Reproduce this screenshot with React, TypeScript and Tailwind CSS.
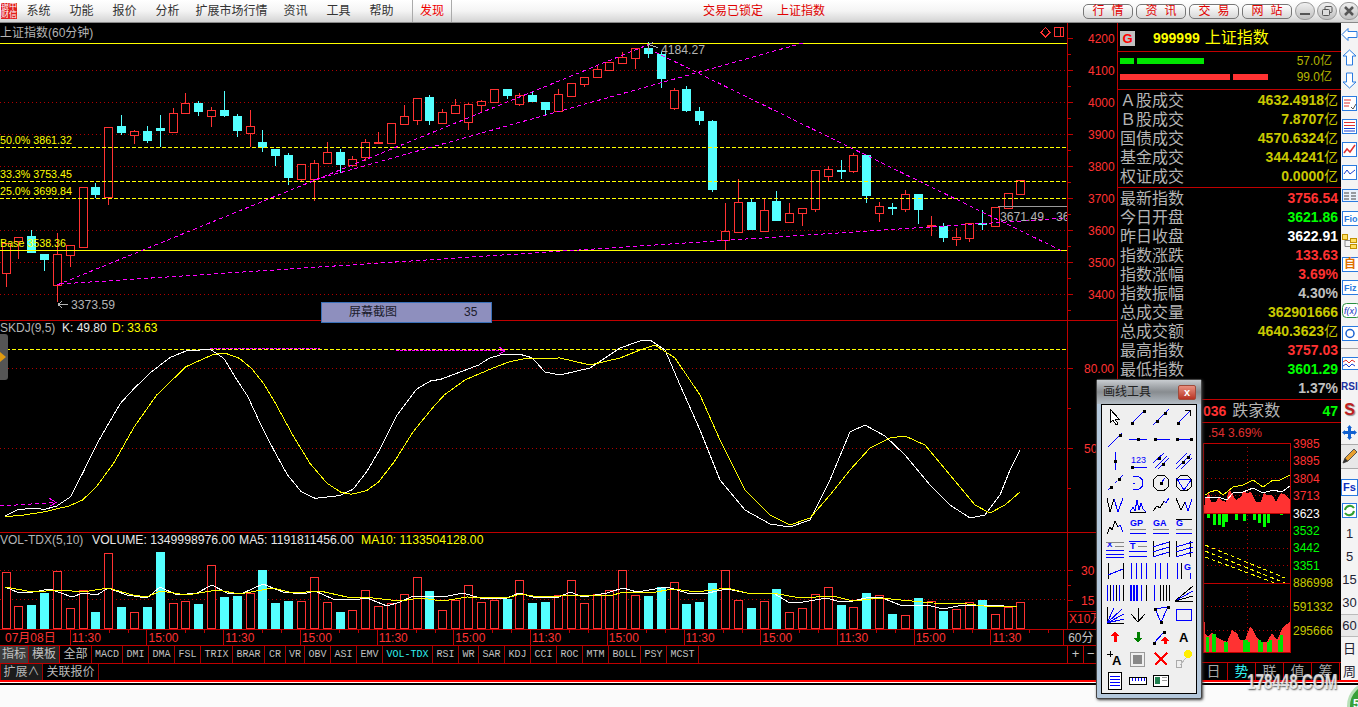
import React from 'react';

const RED = '#ff3232';
const CY = '#54ffff';
const GRID = '#b00000';
const DK = '#c00000';
const YEL = '#ffff00';
const MAG = '#ff00ff';

type Cn = [string, number, number, number, number];
const candles: Cn[] = [
  ['r',243,273,243,287],['r',237,241,237,259],['c',236,253,230,253],['c',254,260,254,271],['r',254,285,233,302],
  ['r',245,255,245,267],['r',187,247,187,247],['c',187,195,183,198],['r',127,197,127,205],['c',126,133,115,135],
  ['r',131,135,130,144],['c',131,141,126,143],['c',128,131,115,147],['r',113,132,108,132],['r',103,113,93,113],
  ['c',103,112,101,116],['r',110,116,107,127],['c',110,116,91,117],['c',116,131,114,137],['r',126,133,110,147],
  ['c',142,148,130,152],['c',149,156,149,166],['c',155,178,153,185],['r',164,179,164,182],['r',163,179,160,201],
  ['r',152,163,142,164],['c',152,165,149,173],['r',159,165,156,167],['r',142,157,139,161],['r',142,143,132,143],
  ['r',123,143,123,143],['r',116,124,105,125],['r',98,120,98,125],['c',97,121,95,125],['r',112,123,109,123],
  ['r',105,113,99,113],['r',104,122,103,130],['r',101,105,100,113],['r',89,102,89,102],['c',89,96,89,99],
  ['r',95,104,93,106],['c',95,102,91,102],['c',102,110,102,115],['r',94,111,89,111],['r',83,96,83,96],
  ['r',77,84,77,87],['r',69,77,66,77],['r',62,70,62,70],['r',57,63,52,64],['r',48,58,48,69],
  ['c',48,54,42,58],['c',54,79,52,88],['r',90,108,88,110],['c',89,111,86,112],['c',111,121,107,125],
  ['c',121,190,120,192],['r',231,240,203,250],['r',202,232,179,232],['c',202,230,199,230],['r',210,231,199,231],
  ['c',201,221,191,221],['r',213,222,203,222],['r',208,213,208,226],['r',170,209,170,212],['r',169,176,166,182],
  ['c',170,171,160,179],['r',155,171,153,173],['c',155,196,155,203],['r',206,213,202,222],['c',207,208,203,215],
  ['r',194,209,190,212],['c',194,210,194,224],['r',225,226,216,236],['c',226,238,223,242],['r',237,239,228,246],
  ['r',223,238,223,242],['c',223,225,210,230],['r',207,226,207,226],['r',193,208,193,208],['r',180,194,180,194],
];
const vols = [572,606,605,593,571,608,590,612,553,607,612,607,552,603,601,604,565,597,596,593,570,603,601,601,577,602,612,610,590,606,603,594,577,591,610,600,585,602,600,599,580,603,602,595,580,603,594,590,570,595,596,587,582,604,602,583,570,600,608,601,589,612,608,594,587,605,607,593,595,614,615,598,601,611,609,602,600,614,607,602];
const cx = (i: number) => Math.round(5.5 + 12.848 * i);

const toPts = (a: number[][]) => a.map((p) => p.join(',')).join(' ');
const kz = (a: number[][]) => a.map(([x, y]) => [+(x / 2.904).toFixed(1), +(320 + y / 3).toFixed(1)]);

const kWhite = [...kz([[15,588],[50,570],[90,565],[130,568],[165,558],[205,530],[240,460],[280,375],[310,320],[350,250],[390,205],[440,155],[495,112],[540,93],[610,88],[650,115],[685,175],[720,230],[760,320],[800,400],[835,465],[875,515],[915,535],[985,527],[1025,508],[1065,455],[1105,385],[1150,290],[1210,207],[1250,183],[1280,178],[1390,135],[1420,115],[1460,103],[1510,103],[1545,113]]),
  [545,372],[560,375],[590,368],[620,348],[640,341],[650,340],[665,350],[680,385],[700,430],[720,480],[745,510],[770,524],[790,527],[810,520],[830,480],[850,432],[865,425],[885,436],[905,455],[930,485],[950,505],[970,518],[985,515],[1000,495],[1010,470],[1020,450]];
const kYel = [...kz([[15,590],[70,585],[130,575],[200,558],[240,540],[280,500],[330,430],[390,320],[455,225],[540,140],[620,103],[655,100],[695,115],[730,145],[765,190],[800,250],[850,345],[900,430],[950,490],[990,517],[1020,523],[1065,512],[1100,485],[1145,425],[1200,335],[1255,265],[1290,225],[1350,180],[1430,145],[1480,125],[1530,115]]),
  [560,358],[590,365],[620,358],[640,350],[655,345],[675,358],[700,395],[720,440],[745,490],[770,515],[790,525],[810,518],[830,495],[850,470],[870,448],[890,438],[905,436],[925,445],[950,475],[975,505],[990,513],[1005,505],[1020,492]];

const ma5 = [[5,587],[17,592],[33,592],[50,589],[72,597],[83,593],[97,595],[108,588],[127,595],[147,598],[160,587],[177,595],[197,593],[212,585],[227,593],[243,593],[263,584],[283,592],[303,594],[315,591],[333,599],[353,600],[367,598],[387,606],[400,602],[413,596],[433,596],[443,597],[463,593],[480,598],[507,598],[519,593],[533,597],[557,598],[570,592],[583,597],[607,593],[623,588],[637,592],[667,587],[687,593],[703,594],[727,589],[747,593],[760,593],[773,593],[790,603],[803,602],[827,598],[840,602],[853,601],[870,597],[880,597],[900,605],[927,605],[943,609],[963,605],[990,605],[1017,607]];
const ma10 = [[5,587],[33,592],[60,590],[83,592],[108,588],[133,595],[147,597],[160,591],[187,595],[217,590],[240,594],[273,588],[293,593],[320,591],[347,597],[373,598],[400,601],[420,598],[443,601],[467,597],[507,598],[520,594],[540,597],[580,595],[610,596],[623,592],[650,593],[673,589],[697,592],[727,588],[747,593],[773,593],[800,598],[833,596],[853,601],[880,598],[933,603],[967,604],[993,607],[1017,606]];

function T({ x, y, s = 11, c = '#b4b4b4', w, a, children }: { x: number; y: number; s?: number; c?: string; w?: number; a?: 'start' | 'end' | 'middle'; children: React.ReactNode }) {
  return <text x={x} y={y} fontSize={s} fill={c} fontWeight={w} textAnchor={a}>{children}</text>;
}

function Dotted({ y, w = 1067 }: { y: number; w?: number }) {
  return <line x1={0} x2={w} y1={y + 0.5} y2={y + 0.5} stroke={GRID} strokeDasharray="1 3" />;
}
function YDash({ y }: { y: number }) {
  return <line x1={0} x2={1067} y1={y + 0.5} y2={y + 0.5} stroke={YEL} strokeDasharray="4 2" />;
}

function PriceChart() {
  return (
    <svg width={1067} height={297} viewBox="0 23 1067 297" shapeRendering="crispEdges" className="block shrink-0">
      <T x={0} y={37} s={12}>上证指数(60分钟)</T>
      {[70, 102, 134, 166, 230, 262, 294].map((y) => <Dotted key={y} y={y} />)}
      {candles.map(([k, bt, bb, wt, wb], i) => {
        const x = cx(i);
        const col = k === 'r' ? RED : CY;
        return (
          <g key={i}>
            {wt < bt && <line x1={x + 0.5} x2={x + 0.5} y1={wt} y2={bt} stroke={col} />}
            {wb > bb && <line x1={x + 0.5} x2={x + 0.5} y1={bb} y2={wb} stroke={col} />}
            {k === 'r'
              ? <rect x={x - 3.5} y={bt + 0.5} width={8} height={Math.max(bb - bt, 1)} fill="#000" stroke={col} />
              : <rect x={x - 4} y={bt} width={9} height={Math.max(bb - bt, 2)} fill={col} />}
          </g>
        );
      })}
      <line x1={0} x2={1067} y1={43.5} y2={43.5} stroke={YEL} />
      <line x1={0} x2={1067} y1={250.5} y2={250.5} stroke={YEL} />
      <YDash y={147} /><YDash y={181} /><YDash y={198} />
      <g stroke={MAG} strokeDasharray="4 3" fill="none">
        <line x1={57} y1={285} x2={650} y2={44} />
        <line x1={314} y1={180} x2={803} y2={43} />
        <line x1={60} y1={284} x2={1067} y2={218} />
        <line x1={655} y1={52} x2={1062} y2={251} />
      </g>
      <line x1={998} x2={1067} y1={206.5} y2={206.5} stroke="#9a9a9a" />
      <T x={0} y={144} c={YEL} s={10.7}>50.0% 3861.32</T>
      <T x={0} y={178} c={YEL} s={10.7}>33.3% 3753.45</T>
      <T x={0} y={195} c={YEL} s={10.7}>25.0% 3699.84</T>
      <T x={0} y={247} c={YEL} s={10.7}>Base 3538.36</T>
      <g stroke="#b4b4b4" fill="none">
        <path d="M68 304.5H58M58 304.5l4 -3M58 304.5l4 3" />
        <path d="M658 47.5L648 44.5M648 44.5v6M648 44.5l5 -2" />
      </g>
      <T x={71} y={309} s={12.2}>3373.59</T>
      <T x={661} y={54} s={12.2}>4184.27</T>
      <T x={1000} y={221} s={12.2}>3671.49</T>
      <T x={1056} y={221} s={12.2}>36</T>
      <path d="M1045.5 27.5L1050 32.5L1045.5 37L1041 32.5Z" fill="none" stroke={RED} />
      <rect x={1054.5} y={27.5} width={9} height={9} fill="none" stroke={RED} />
      <line x1={1060.5} x2={1060.5} y1={27} y2={37} stroke={RED} />
    </svg>
  );
}

function KdjChart() {
  return (
    <svg width={1067} height={211} viewBox="0 321 1067 211" shapeRendering="crispEdges" className="block shrink-0">
      <T x={0} y={332} s={12}>SKDJ(9,5)</T>
      <T x={62} y={332} s={12} c="#e8e8e8">K: 49.80</T>
      <T x={112} y={332} s={12} c={YEL}>D: 33.63</T>
      <Dotted y={368} /><Dotted y={448} />
      <line x1={0} x2={1067} y1={349.5} y2={349.5} stroke={YEL} strokeDasharray="4 2" />
      <polyline points={toPts(kWhite)} fill="none" stroke="#fff" />
      <polyline points={toPts(kYel)} fill="none" stroke={YEL} />
      <g stroke={MAG} fill="none">
        <path d="M0 506L55 502.5" strokeDasharray="4 3" />
        <path d="M49 498L56 502.5L50 506" />
        <path d="M210 348H320" strokeDasharray="3 1" />
        <path d="M396 350.5H505" strokeDasharray="3 1" />
        <path d="M499 347L505 351L499 354" />
      </g>
    </svg>
  );
}

function VolChart() {
  return (
    <svg width={1067} height={96} viewBox="0 533 1067 96" shapeRendering="crispEdges" className="block shrink-0">
      <T x={0} y={544} s={12}>VOL-TDX(5,10)</T>
      <T x={92} y={544} s={12.2} c="#e8e8e8">VOLUME: 1349998976.00</T>
      <T x={239} y={544} s={12.2} c="#e8e8e8">MA5: 1191811456.00</T>
      <T x={361} y={544} s={12.2} c={YEL}>MA10: 1133504128.00</T>
      <Dotted y={570} /><Dotted y={599} />
      {vols.map((top, i) => {
        const x = cx(i);
        return candles[i][0] === 'r'
          ? <rect key={i} x={x - 3.5} y={top + 0.5} width={8} height={628 - top} fill="#000" stroke={RED} />
          : <rect key={i} x={x - 4} y={top} width={9} height={629 - top} fill={CY} />;
      })}
      <polyline points={toPts(ma5)} fill="none" stroke="#fff" />
      <polyline points={toPts(ma10)} fill="none" stroke={YEL} />
    </svg>
  );
}

function Axis({ top, h, majors, minors, labels }: { top: number; h: number; majors: number[]; minors: number[]; labels: [string, number, number][] }) {
  return (
    <div className="w-[49px] border-l border-[#c00000] box-content">
      <svg width={49} height={h} viewBox={`0 ${top} 49 ${h}`} shapeRendering="crispEdges" className="block">
        {majors.map((y) => <line key={y} x1={0} x2={5} y1={y + 0.5} y2={y + 0.5} stroke={DK} />)}
        {minors.map((y) => <line key={y} x1={0} x2={3} y1={y + 0.5} y2={y + 0.5} stroke={DK} />)}
        {labels.map(([t, x, y]) => <T key={t} x={x} y={y + 5} s={12} c={RED}>{t}</T>)}
      </svg>
    </div>
  );
}

const timeLabels = ['11:30','15:00','11:30','15:00','11:30','15:00','11:30','15:00','11:30','15:00','11:30','15:00','11:30'];
const tabs: [string, string][] = [['MACD','w-[31px]'],['DMI','w-[26px]'],['DMA','w-[26px]'],['FSL','w-[26px]'],['TRIX','w-[32px]'],['BRAR','w-[32px]'],['CR','w-[21px]'],['VR','w-[19px]'],['OBV','w-[26px]'],['ASI','w-[26px]'],['EMV','w-[26px]'],['VOL-TDX','w-[50px]'],['RSI','w-[26px]'],['WR','w-[20px]'],['SAR','w-[26px]'],['KDJ','w-[26px]'],['CCI','w-[26px]'],['ROC','w-[26px]'],['MTM','w-[26px]'],['BOLL','w-[32px]'],['PSY','w-[26px]'],['MCST','w-[32px]']];

function LeftColumn() {
  return (
    <div className="w-[1117px] shrink-0 flex flex-col bg-black">
      <div className="flex h-[298px] border-b border-[#c00000]">
        <PriceChart />
        <Axis top={23} h={297}
          majors={[38, 70, 102, 134, 166, 198, 230, 262, 294]}
          minors={[54, 86, 118, 150, 182, 214, 246, 278, 310]}
          labels={[['4200',20,38],['4100',20,70],['4000',20,102],['3900',20,134],['3800',20,166],['3700',20,198],['3600',20,230],['3500',20,262],['3400',20,294]]} />
      </div>
      <div className="flex h-[212px] border-b border-[#c00000]">
        <KdjChart />
        <Axis top={321} h={211} majors={[368, 448]} minors={[408, 488]} labels={[['80.00',16,368],['50.00',16,448]]} />
      </div>
      <div className="flex h-[97px] border-b border-[#c00000]">
        <VolChart />
        <div className="w-[49px] border-l border-[#c00000] box-content flex flex-col">
          <svg width={49} height={78} viewBox="0 533 49 78" shapeRendering="crispEdges" className="block">
            {[570, 600].map((y) => <line key={y} x1={0} x2={5} y1={y + 0.5} y2={y + 0.5} stroke={DK} />)}
            <line x1={0} x2={3} y1={585.5} y2={585.5} stroke={DK} />
            <T x={13} y={575} s={12} c={RED}>30</T>
            <T x={13} y={605} s={12} c={RED}>15</T>
          </svg>
          <div className="border-t border-[#c00000] h-[18px] pl-[1px] text-[12px] leading-[15px] text-[#ff3232] whitespace-nowrap">X10万</div>
        </div>
      </div>
      <div className="flex h-[16px] border-b border-[#c00000]">
        <div className="w-[70px] pl-[5px] text-[12px] leading-[17px] text-[#ff3232] whitespace-nowrap">07月08日</div>
        {timeLabels.map((t, i) => (
          <div key={i} className={`relative border-l border-[#c00000] pl-[1px] text-[12px] leading-[17px] text-[#ff3232] ${i === 12 ? 'w-[73px]' : 'w-[77px]'}`}>
            {t}
            <span className="absolute left-[38px] top-0 w-px h-[3px] bg-[#c00000]" />
            <span className="absolute left-[57px] top-0 w-px h-[3px] bg-[#c00000]" />
          </div>
        ))}
        <div className="w-[49px] border-l border-[#c00000] box-content pl-[4px] text-[12px] leading-[17px] text-[#c4c4c4] whitespace-nowrap">60分</div>
      </div>
      <div className="flex h-[18px] border-b border-[#c00000] text-[#c0c0c0]">
        <div className="w-[29px] text-center text-[12px] leading-[17px] bg-[#3c3c3c] border-r border-[#a00000]">指标</div>
        <div className="w-[31px] text-center text-[12px] leading-[17px] bg-[#262626] border-r border-[#d00000]">模板</div>
        <div className="w-[32px] text-center text-[12px] leading-[17px] border-r border-[#a00000]">全部</div>
        {tabs.map(([t, w]) => (
          <div key={t} className={`${w} text-center font-['Liberation_Mono',monospace] text-[10px] leading-[17px] border-r border-[#a00000] ${t === 'VOL-TDX' ? 'text-[#30f0f0]' : ''}`}>{t}</div>
        ))}
        <div className="flex-1" />
        <div className="w-[50px] border-l border-[#c00000] flex text-[13px] leading-[16px] text-[#c4c4c4]">
          <div className="w-[16px] text-center border-r border-[#c00000]">+</div>
          <div className="flex-1 pl-[3px]">−</div>
        </div>
      </div>
      <div className="flex h-[16px] text-[#b8b8b8] text-[12px] leading-[17px]">
        <div className="w-[43px] text-center bg-[#1c1c1c] border-r border-l border-[#a00000]">扩展∧</div>
        <div className="w-[56px] text-center border-r border-[#a00000]">关联报价</div>
      </div>
    </div>
  );
}

const VAL_Y = 'text-[#c8c800]';
function Row({ label, value, unit, color }: { label: string; value: string; unit?: boolean; color: string }) {
  return (
    <div className="flex justify-between items-center h-[19px] pl-[2px] pr-[3px] whitespace-nowrap">
      <span className="text-[16px] leading-[19px] text-[#b4b4b4]">{label}</span>
      <span className={`${color} text-[14px] leading-[19px] font-bold`}>
        {value}{unit && <span className="font-normal text-[14px]">亿</span>}
      </span>
    </div>
  );
}

function MiniChart() {
  const redTop = [[1205,498],[1207,498],[1209,492],[1211,502],[1216,502],[1219,496],[1221,500],[1226,502],[1229,490],[1231,492],[1236,500],[1241,497],[1244,490],[1246,493],[1251,492],[1254,498],[1256,502],[1261,502],[1264,493],[1266,495],[1271,495],[1274,498],[1276,502],[1281,493],[1286,495],[1290,500]];
  const green: [number, number][] = [[1207,518],[1213,525],[1218,525],[1222,527],[1225,522],[1235,520],[1243,521],[1253,520],[1258,523],[1263,527],[1267,523],[1280,515]];
  const vol = [[1205,633],[1208,637],[1212,632],[1215,637],[1218,638],[1222,640],[1227,642],[1232,630],[1237,633],[1240,640],[1245,640],[1250,627],[1253,630],[1257,638],[1262,642],[1267,642],[1272,633],[1277,640],[1283,627],[1287,624],[1290,622]];
  return (
    <svg width={223} height={220} viewBox="1118 443 223 220" shapeRendering="crispEdges" className="block overflow-visible">
      {[460, 478, 495, 530, 548, 565, 606, 630].map((y) => <line key={y} x1={1203} x2={1291} y1={y + 0.5} y2={y + 0.5} stroke={GRID} strokeDasharray="1 3" />)}
      <line x1={1247.5} x2={1247.5} y1={443} y2={653} stroke={GRID} strokeDasharray="1 3" />
      <polygon points={`1204,513 ${toPts(redTop)} 1290,513`} fill={RED} />
      {green.map(([x, y]) => <rect key={x} x={x} y={514} width={3} height={y - 514} fill="#00ff00" />)}
      <polyline points="1205,495 1210,492 1217,490 1223,495 1233,487 1243,485 1253,480 1263,487 1273,480 1280,480 1290,475" fill="none" stroke={YEL} />
      <polyline points="1205,498 1212,497 1218,497 1227,500 1233,493 1243,492 1253,488 1263,493 1273,490 1282,492 1290,486" fill="none" stroke="#fff" />
      <g stroke={YEL} strokeDasharray="4 3">
        <line x1={1205} y1={545} x2={1285} y2={578} />
        <line x1={1205} y1={551} x2={1285} y2={583} />
        <line x1={1205} y1={557} x2={1275} y2={583} />
      </g>
      <polygon points={`1204,653 1204,610 ${toPts(vol)} 1291,653`} fill={RED} />
      {[[1206,637],[1212,634],[1213,634],[1224,642],[1225,642],[1243,640],[1245,640],[1247,642],[1258,640],[1260,642],[1267,642],[1269,640],[1278,640],[1280,635]].map(([x, y], i) => (
        <rect key={i} x={x} y={y} width={3} height={653 - y} fill="#00e000" />
      ))}
      <rect x={1203.5} y={443.5} width={87} height={209} fill="none" stroke={DK} />
      <line x1={1203} x2={1291} y1={513.5} y2={513.5} stroke={DK} />
      <line x1={1203} x2={1291} y1={583.5} y2={583.5} stroke={DK} />
      <line x1={1118} x2={1341} y1={662.5} y2={662.5} stroke={DK} />
      {[['3985',443,RED],['3895',460,RED],['3804',478,RED],['3713',495,RED],['3623',513,'#fff'],['3532',530,'#00ff00'],['3442',547,'#00ff00'],['3351',565,'#00ff00']].map(([t, y, c]) => (
        <T key={t as string} x={1293} y={(y as number) + 5} s={12} c={c as string}>{t}</T>
      ))}
      {[['886998',582],['591332',606],['295666',630]].map(([t, y]) => (
        <T key={t as string} x={1293} y={(y as number) + 5} s={12} c="#c8c800">{t}</T>
      ))}
    </svg>
  );
}

function RightPanel() {
  return (
    <div className="w-[224px] shrink-0 border-l border-[#c00000] bg-black flex flex-col">
      <div className="h-[29px] border-b border-[#c00000] flex items-center pl-[2px] pt-[2px]">
        <div className="w-[15px] h-[15px] bg-[#c0c0c0] text-[#ff0000] font-bold text-[13px] leading-[15px] text-center">G</div>
        <span className="ml-[18px] text-[#ffff00] font-bold text-[14px]">999999</span>
        <span className="ml-[5px] text-[#ffff00] text-[16px]">上证指数</span>
      </div>
      <div className="h-[38px] border-b border-[#c00000] pt-px pl-[2px] pr-[9px] text-[12px] text-[#b8b800]">
        <div className="flex items-center h-[16px]">
          <span className="w-[14px] h-[6px] bg-[#00e600]" />
          <span className="ml-[3px] w-[67px] h-[6px] bg-[#00e600]" />
          <span className="ml-auto">57.0亿</span>
        </div>
        <div className="flex items-center h-[16px]">
          <span className="w-[110px] h-[6px] bg-[#ff3232]" />
          <span className="ml-[3px] w-[35px] h-[6px] bg-[#ff3232]" />
          <span className="ml-auto">99.0亿</span>
        </div>
      </div>
      <div className="border-b border-[#c00000] h-[98px] pt-px">
        <Row label="Ａ股成交" value="4632.4918" unit color={VAL_Y} />
        <Row label="Ｂ股成交" value="7.8707" unit color={VAL_Y} />
        <Row label="国债成交" value="4570.6324" unit color={VAL_Y} />
        <Row label="基金成交" value="344.4241" unit color={VAL_Y} />
        <Row label="权证成交" value="0.0000" unit color={VAL_Y} />
      </div>
      <div className="border-b border-[#c00000] h-[212px] pt-px">
        <Row label="最新指数" value="3756.54" color="text-[#ff3232]" />
        <Row label="今日开盘" value="3621.86" color="text-[#00ff00]" />
        <Row label="昨日收盘" value="3622.91" color="text-white" />
        <Row label="指数涨跌" value="133.63" color="text-[#ff3232]" />
        <Row label="指数涨幅" value="3.69%" color="text-[#ff3232]" />
        <Row label="指数振幅" value="4.30%" color="text-[#c0c0c0]" />
        <Row label="总成交量" value="362901666" color={VAL_Y} />
        <Row label="总成交额" value="4640.3623" unit color={VAL_Y} />
        <Row label="最高指数" value="3757.03" color="text-[#ff3232]" />
        <Row label="最低指数" value="3601.29" color="text-[#00ff00]" />
        <Row label="" value="1.37%" color="text-[#c0c0c0]" />
      </div>
      <div className="h-[23px] border-b border-[#c00000] flex items-center pl-[85px] pr-[3px] whitespace-nowrap">
        <span className="text-[#ff3232] font-bold text-[14px]">036</span>
        <span className="ml-[6px] text-[16px] text-[#b4b4b4]">跌家数</span>
        <span className="ml-auto text-[#00ff00] font-bold text-[14px]">47</span>
      </div>
      <div className="h-[20px] pl-[90px] text-[12px] leading-[20px] text-[#e03030]">.54 3.69%</div>
      <MiniChart />
      <div className="flex pl-[82px] h-[17px] text-[14px] leading-[17px] text-[#a8a8a8]">
        {['日', '势', '联', '值', '筹'].map((t, i) => (
          <div key={t} className={`w-[28px] text-center border-r border-[#c00000] ${i === 1 ? 'text-[#30f0f0]' : ''}`}>{t}</div>
        ))}
      </div>
    </div>
  );
}

const TI = ({ children }: { children: React.ReactNode }) => (
  <div className="h-[23px] flex items-center justify-center shrink-0">
    <svg width={17} height={17} viewBox="0 0 17 17">{children}</svg>
  </div>
);
const BLU = '#2a7be0';
const TxtI = ({ t, c = BLU, box = true, size = 9 }: { t: string; c?: string; box?: boolean; size?: number }) => (
  <TI>
    {box && <rect x={1.5} y={1.5} width={18} height={14} fill="#fff" stroke={BLU} />}
    <text x={3} y={12} fontSize={size} fill={c} fontWeight={700}>{t}</text>
  </TI>
);

function Toolbar() {
  const num = 'h-[23px] flex items-center justify-center text-[13px] text-[#223] shrink-0';
  return (
    <div className="w-[17px] shrink-0 bg-[#f4f4f4] flex flex-col overflow-hidden">
      <TI><path d="M1 8.5L7 2.5V5.5H16V11.5H7V14.5Z" fill="#fff" stroke={BLU} /></TI>
      <TI><path d="M8.5 1L15 7H11.5V16H5.5V7H2Z" fill="#fff" stroke={BLU} /></TI>
      <TI><path d="M8.5 16L15 10H11.5V1H5.5V10H2Z" fill="#fff" stroke={BLU} /></TI>
      <TI><rect x={1.5} y={1.5} width={14} height={14} fill="#fff" stroke={BLU} /><path d="M3 5H10M3 8H9M3 11H8" stroke="#e03030" /><path d="M10 12l2 2l3 -5" stroke="#555" fill="none" /></TI>
      <TI><rect x={1.5} y={1.5} width={14} height={14} fill="#fff" stroke={BLU} /><path d="M3 4.5H14M3 7.5H14" stroke="#e03030" /><path d="M3 10.5H14M3 13H14" stroke="#1a40d0" /></TI>
      <TI><rect x={1.5} y={1.5} width={14} height={14} fill="#fff" stroke={BLU} /><path d="M3 12L6 8L9 11L14 4" stroke="#e03030" fill="none" strokeWidth={1.5} /></TI>
      <TI><rect x={1.5} y={1.5} width={14} height={14} fill="#fff" stroke={BLU} /><path d="M3 10L6 6L9 10L14 6" stroke="#1a40d0" fill="none" /></TI>
      <TI><rect x={1.5} y={2.5} width={16} height={12} fill="#eaf2fb" stroke={BLU} /><path d="M3 6H8M10 6H15M3 9H8M10 9H15M3 12H8M10 12H15" stroke="#444" /></TI>
      <TxtI t="Fio" />
      <TI><rect x={1.5} y={1.5} width={5} height={5} fill="#ffe060" stroke="#c09000" /><rect x={9.5} y={5.5} width={6} height={4} fill="#ffe060" stroke="#c09000" /><rect x={9.5} y={11.5} width={6} height={4} fill="#ffe060" stroke="#c09000" /><path d="M4 7V13.5H9M4 7.5H9" stroke="#888" fill="none" /></TI>
      <TxtI t="自" c="#e07000" size={12} />
      <TxtI t="Fiz" />
      <TI><rect x={1.5} y={1.5} width={18} height={14} rx={4} fill="#fff" stroke="#2a9040" /><text x={3} y={12} fontSize={9} fontStyle="italic" fill="#1030c0">f(x)</text></TI>
      <TI><rect x={1.5} y={1.5} width={18} height={14} fill="#fff" stroke={BLU} /><circle cx={9} cy={8.5} r={4} fill="none" stroke="#1a60d0" strokeWidth={1.5} /></TI>
      <div className="h-[7px] shrink-0 flex items-start pt-[3px]"><div className="w-full h-px bg-[#aaa]" /></div>
      <TI><rect x={1.5} y={2.5} width={18} height={12} fill="#fff" stroke={BLU} /><path d="M2 7L5 5L8 8L11 5L14 7" stroke="#e03030" fill="none" /><path d="M2 11L5 9L8 12L11 9L14 11" stroke="#1a40d0" fill="none" /></TI>
      <div className="h-[23px] flex items-center shrink-0 text-[#2030a0] font-bold text-[10px] whitespace-nowrap overflow-hidden">RSI</div>
      <div className="h-[23px] flex items-center justify-center shrink-0 text-[#c02020] font-bold text-[16px] [text-shadow:1px_1px_1px_#888]">S</div>
      <TI><path d="M8.5 1L11 4H10V7H13V6L16 8.5L13 11V10H10V13H11L8.5 16L6 13H7V10H4V11L1 8.5L4 6V7H7V4H6Z" fill="#1060d0" /></TI>
      <div className="h-[25px] shrink-0 border-y border-[#aaa] bg-[#e8e8e8] flex items-center justify-center">
        <svg width={17} height={17} viewBox="0 0 17 17"><path d="M2 15L4 10L13 1L16 4L7 13Z" fill="#e8a030" stroke="#555" /><path d="M2 15L4 10L7 13Z" fill="#333" /></svg>
      </div>
      <div className="h-[7px] shrink-0" />
      <div className="h-[23px] flex items-center justify-center shrink-0">
        <div className="w-[17px] h-[17px] border border-[#2a7be0] bg-white text-[11px] leading-[15px] text-[#1030c0] pl-px font-bold">Fs</div>
      </div>
      <TI><rect x={1.5} y={1.5} width={14} height={14} fill="#fff" stroke={BLU} /><path d="M4 8A5 5 0 0 1 13 6M13 9A5 5 0 0 1 4 11" stroke="#30a030" strokeWidth={2} fill="none" /></TI>
      <div className={num}>1</div>
      <div className={num}>5</div>
      <div className={num}>15</div>
      <div className={num}>30</div>
      <div className={`${num} bg-[#e8e8e8] border-y border-[#bbb]`}>60</div>
      <div className={num}>日</div>
      <div className={num}>周</div>
    </div>
  );
}

const B = '#0000ff';
const L = (a: number, b: number, c: number, d: number, col = B, w = 1) => <line x1={a} y1={b} x2={c} y2={d} stroke={col} strokeWidth={w} />;
const D = (x: number, y: number) => <rect x={x - 1.5} y={y - 1.5} width={3} height={3} fill="#000" />;
const P = (pts: string, col = B) => <polyline points={pts} fill="none" stroke={col} />;
const TX = (t: string, x: number, y: number, s = 9, c = B, w = 700) => <text x={x} y={y} fontSize={s} fill={c} fontWeight={w}>{t}</text>;

const toolIcons: React.ReactNode[] = [
  <path d="M5 2V16L8 13L11 18L13 17L10 12H14Z" fill="#fff" stroke="#000" />,
  <>{L(4,16,16,4)}{D(4,16)}{D(16,4)}</>,
  <>{L(2,18,18,2)}{D(6,14)}{D(14,6)}</>,
  <>{L(4,16,17,3)}{D(4,16)}<path d="M17 3L11 4M17 3L16 9" stroke="#000" /></>,
  <>{L(3,18,17,4)}{D(15,6)}</>,
  <>{L(1,10,19,10)}{D(10,10)}</>,
  <>{L(4,10,19,10)}{D(4,10)}</>,
  <>{L(3,10,17,10)}{D(3,10)}{D(17,10)}</>,
  <>{L(10,1,10,19)}{D(10,10)}</>,
  <>{TX('123',3,12,9,B,400)}{L(4,16,19,16)}{D(4,16)}</>,
  <>{L(2,12,13,2)}{L(7,18,18,7)}{L(4,17,16,5)}{D(8,7)}{D(12,13)}</>,
  <>{L(2,13,13,2)}{L(7,18,18,7)}{L(2,18,17,3)}{D(9,11)}{D(14,6)}</>,
  <>{L(3,17,7,13)}{L(10,10,12,8)}{L(15,5,18,2)}{D(6,14)}{D(14,6)}</>,
  <path d="M5 3Q15 3 15 10T5 17M5 10h2" fill="none" stroke={B} />,
  <><circle cx={10} cy={10} r={8} fill="none" stroke="#000" />{L(10,10,14,5)}{D(10,10)}</>,
  <><circle cx={10} cy={10} r={8} fill="none" stroke="#000" /><path d="M3 6L17 7L10 17Z" fill="none" stroke={B} /></>,
  <>{P('2,3 5,17 9,4','#000')}{P('9,4 13,17 18,3')}</>,
  <>{P('2,17 5,12 7,16 9,5 11,15 13,8 15,14 18,17')}{L(2,17,18,17,'#000')}</>,
  <>{P('2,16 6,11 9,13 13,6','#000')}{P('13,6 15,8 18,3')}</>,
  <>{P('2,3 7,15 11,7','#000')}{P('11,7 14,16 18,4')}</>,
  <>{P('2,17 5,10 7,13 10,4 13,10','#000')}{P('13,10 15,8 18,15')}</>,
  <>{TX('GP',2,9)}{L(2,12,18,12,'#888')}{L(2,16,18,16)}</>,
  <>{TX('GA',2,9)}{L(2,12,18,12,'#888')}{L(2,16,18,16)}</>,
  <>{TX('G',2,9)}{L(2,2,18,2,'#000')}{L(2,12,18,12,'#888')}{L(2,16,18,16)}</>,
  <>{TX('X',2,8,8)}{L(1,3,19,3,'#888')}{L(10,7,19,7,'#888')}{L(1,11,19,11)}{L(1,15,19,15)}{L(1,18,19,18)}</>,
  <>{TX('T',2,10)}{L(1,2,19,2)}{L(10,7,19,7,'#888')}{L(1,12,19,12)}{L(1,17,19,17)}</>,
  <>{L(2,2,2,18,'#000')}{L(18,2,18,18,'#000')}{L(2,8,18,3)}{L(2,13,18,8)}{L(2,18,18,13)}</>,
  <>{L(2,2,2,18,'#000')}{L(16,2,16,18,'#000')}{L(2,8,19,3)}{L(2,13,19,8)}{L(2,18,19,13)}</>,
  <>{L(3,2,3,18,'#000')}{L(18,2,18,18,'#000')}{L(3,14,18,8)}</>,
  <>{L(3,2,3,18)}{L(8,2,8,18)}{L(13,2,13,18)}{L(18,2,18,18)}</>,
  <>{L(4,2,4,18)}{L(9,2,9,18)}{L(16,2,16,18)}</>,
  <>{L(3,2,3,18)}{L(7,2,7,18,'#000')}{TX('G',10,9)}{L(16,12,16,18)}</>,
  <>{L(2,2,2,18)}{L(5,2,5,18,'#000')}{L(8,2,8,18)}{L(11,2,11,18,'#000')}{L(14,2,14,18)}{L(18,2,18,18,'#000')}</>,
  <>{L(3,2,3,18,B,2)}{L(6,2,6,18,B,2)}{L(9,2,9,18,B,2)}{L(13,2,13,18)}{L(18,2,18,18,'#000')}</>,
  <>{L(3,2,3,18)}{L(9,2,9,18,'#000')}{L(12,2,12,18,'#000')}{L(15,2,15,18,'#000')}{L(18,2,18,18,'#000')}</>,
  <>{L(1,18,19,3,'#000')}{L(1,18,19,8)}{L(1,18,19,13,'#000')}{L(1,18,19,18,'#000')}</>,
  <>{L(2,2,2,18,'#000')}{L(2,18,19,18,'#000')}{L(2,18,17,4)}{L(2,18,19,9)}{L(2,18,19,14)}{L(2,18,9,3)}</>,
  <>{L(10,3,10,17,'#000')}{L(3,9,10,17,'#000')}{L(17,9,10,17,'#000')}</>,
  <><path d="M4 4L17 2L10 17Z" fill="none" stroke={B} />{D(4,4)}{D(17,2)}{D(10,17)}</>,
  <rect x={2.5} y={4.5} width={15} height={11} fill="none" stroke={B} />,
  <path d="M10 4L14 9H11.5V15H8.5V9H6Z" fill="#ff0000" />,
  <path d="M10 16L14 11H11.5V5H8.5V11H6Z" fill="#008000" />,
  <>{L(2,17,14,4)}{D(3,16)}{D(13,5)}<path d="M14 9L18 14H15.5V17H12.5V14H10Z" fill="#ff0000" /></>,
  <text x={5} y={15} fontSize={13} fontWeight={700} fill="#000">A</text>,
  <><text x={7} y={16} fontSize={13} fontWeight={700} fill="#000">A</text>{L(2,5,8,5,'#000')}{L(5,2,5,8,'#000')}</>,
  <><rect x={2.5} y={3.5} width={14} height={14} fill="none" stroke="#999" /><rect x={5} y={6} width={9} height={9} fill="#888" /></>,
  <>{L(4,4,16,16,'#ff0000',1.5)}{L(16,4,4,16,'#ff0000',1.5)}</>,
  <><rect x={2.5} y={11.5} width={5} height={7} fill="none" stroke="#aaa" />{L(6,16,16,4,'#bbb')}<circle cx={14} cy={5} r={4} fill="#ffee00" /></>,
  <><rect x={3.5} y={1.5} width={13} height={17} fill="#fff" stroke="#000" />{L(5,5,15,5)}{L(5,8,15,8)}{L(5,11,15,11)}{L(5,14,15,14)}</>,
  <><rect x={1.5} y={6.5} width={17} height={7} fill="#fff" stroke="#000" />{L(4,7,4,10)}{L(7,7,7,10)}{L(10,7,10,10)}{L(13,7,13,10)}{L(16,7,16,10)}</>,
  <><rect x={2.5} y={4.5} width={15} height={11} fill="#fff" stroke="#000" /><rect x={4} y={6} width={5} height={7} fill="#208050" /><rect x={11} y={6} width={5} height={1} fill="#999" /><rect x={11} y={9} width={5} height={1} fill="#999" /></>,
];

function ToolWindow() {
  return (
    <div className="absolute left-[1096px] top-[379px] w-[106px] h-[320px] border border-[#444] bg-[#b4c8dc] rounded-[2px] shadow-[1px_1px_3px_#333]">
      <div className="h-[24px] flex items-center justify-between pl-[6px] pr-[5px] bg-gradient-to-b from-[#c8ccd0] via-[#888c90] to-[#b4bcc4]">
        <span className="text-[12px] text-[#222]">画线工具</span>
        <div className="w-[18px] h-[15px] rounded-[2px] border border-[#a04a3a] bg-gradient-to-b from-[#e89080] to-[#b83020] text-white text-[11px] font-bold leading-[12px] text-center">x</div>
      </div>
      <div className="mx-[4px] h-[290px] border border-black bg-[#efefef] grid grid-cols-[repeat(4,23px)] auto-rows-[22px] px-[1px] pt-[1px]">
        {toolIcons.map((ic, i) => (
          <div key={i} className="flex items-center justify-center">
            <svg width={20} height={20} viewBox="0 0 20 20" shapeRendering="crispEdges">{ic}</svg>
          </div>
        ))}
      </div>
    </div>
  );
}

function Logo() {
  return (
    <div className="w-[16px] h-[16px] ml-[1px] bg-[#e02020] grid grid-cols-2 text-[8px] leading-[8px] text-white text-center overflow-hidden shrink-0">
      <span>银</span><span>中</span><span>财</span><span>信</span>
    </div>
  );
}

function Header() {
  const item = 'w-[43px] text-center shrink-0';
  const btn = 'w-[50px] h-[15px] rounded-[5px] border border-[#777] bg-gradient-to-b from-white to-[#d8d8d8] text-[#e00000] text-[12px] leading-[13px] flex justify-around px-[5px] shrink-0';
  const win = 'w-[20px] h-[18px] rounded-full border border-[#999] bg-gradient-to-b from-[#f0f0f0] to-[#c0c0c0] flex items-center justify-center shrink-0';
  return (
    <div className="h-[23px] flex items-center border-b border-[#888] bg-gradient-to-b from-white via-[#f4f4f4] to-[#d4d4d4] text-[12px] text-[#333] whitespace-nowrap overflow-hidden">
      <Logo />
      <div className={item}>系统</div>
      <div className={item}>功能</div>
      <div className={item}>报价</div>
      <div className={item}>分析</div>
      <div className="w-[85px] text-center shrink-0">扩展市场行情</div>
      <div className={item}>资讯</div>
      <div className={item}>工具</div>
      <div className={item}>帮助</div>
      <div className="ml-[9px] w-[40px] h-full border-x border-[#aaa] text-center leading-[22px] text-[#f00000] shrink-0">发现</div>
      <span className="ml-[251px] text-[#e00000]">交易已锁定</span>
      <span className="ml-[14px] text-[#e00000]">上证指数</span>
      <div className="ml-[258px] flex gap-[3px]">
        <div className={btn}><span>行</span><span>情</span></div>
        <div className={btn}><span>资</span><span>讯</span></div>
        <div className={btn}><span>交</span><span>易</span></div>
        <div className={btn}><span>网</span><span>站</span></div>
      </div>
      <div className="ml-[3px] flex gap-[2px]">
        <div className={win}><svg width={12} height={12} viewBox="0 0 12 12"><path d="M1 9H11" stroke="#555" strokeWidth={2} /></svg></div>
        <div className={win}><svg width={12} height={12} viewBox="0 0 12 12"><rect x={4} y={1.5} width={7} height={6} rx={1} fill="none" stroke="#555" /><rect x={1.5} y={4.5} width={7} height={6} rx={1} fill="#ddd" stroke="#555" /></svg></div>
        <div className={win}><svg width={12} height={12} viewBox="0 0 12 12"><path d="M2 2L10 10M10 2L2 10" stroke="#555" strokeWidth={2.5} /></svg></div>
      </div>
    </div>
  );
}

export default function App() {
  return (
    <div className="relative w-[1358px] h-[707px] overflow-hidden bg-[#fbfbfb] font-['Liberation_Sans','Noto_Sans_CJK_SC',sans-serif]">
      <Header />
      <div className="flex h-[657px] overflow-hidden">
        <LeftColumn />
        <RightPanel />
        <Toolbar />
      </div>
      <div className="h-[2px] bg-[#ff0000]" />
      <div className="h-[1px] bg-white" />
      <div className="h-[2px] bg-black" />

      <div className="absolute left-[321px] top-[302px] w-[171px] h-[21px] bg-[#8e8fbe] border border-[#3a70b8] text-[12px] leading-[19px] text-[#1c1c2c]">
        <span className="absolute left-[27px]">屏幕截图</span>
        <span className="absolute left-[142px]">35</span>
      </div>
      <div className="absolute left-0 top-[334px] w-[8px] h-[46px] bg-[#555] rounded-r-[3px] flex items-center">
        <svg width={6} height={10} viewBox="0 0 6 10"><path d="M0 0L6 5L0 10Z" fill="#e09a10" /></svg>
      </div>

      <ToolWindow />

      <div className="absolute left-[1247px] top-[671px] origin-left scale-x-[0.69] text-[22px] leading-[22px] font-bold text-white/80 whitespace-nowrap [text-shadow:1px_1px_2px_#555]">178448.COM</div>
      <div className="absolute left-[1347px] top-[681px] w-[50px] h-[50px] rounded-full bg-[#38a038] border-[3px] border-[#b8e0b8] text-white text-[12px] font-bold">
        <span className="absolute left-[3px] top-[11px]">5</span>
      </div>
    </div>
  );
}
